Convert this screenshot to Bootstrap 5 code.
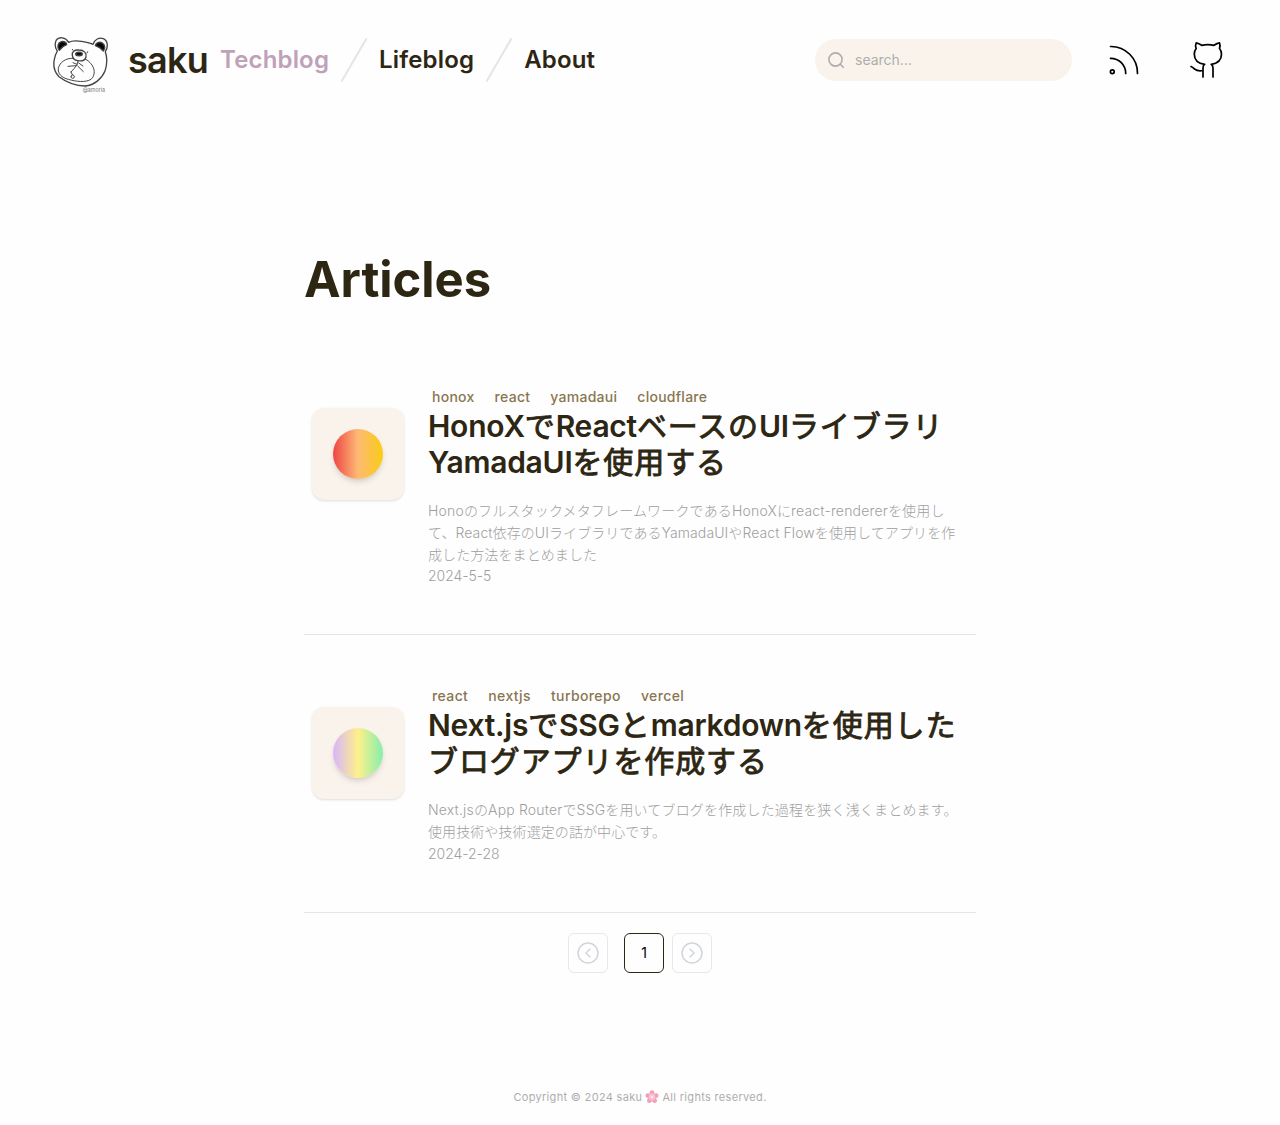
<!DOCTYPE html>
<html lang="ja">
<head>
<meta charset="utf-8">
<meta name="viewport" content="width=device-width, initial-scale=1">
<title>saku Techblog</title>
<link href="https://cdn.jsdelivr.net/npm/bootstrap@5.3.0/dist/css/bootstrap.min.css" rel="stylesheet">
<style>
body{font-family:Inter,"Noto Sans CJK JP",sans-serif;background:#fefefe;color:#2d2613;min-height:1125px}
a{color:inherit;text-decoration:none}
.site-header{height:120px;padding:0 52px}
.bear{width:56px;height:56px;margin-top:10px}
.brand{font-size:36px;font-weight:600;line-height:40px;margin-left:20px;width:80px;white-space:nowrap;letter-spacing:-.7px}
.site-nav{margin-left:12px;font-size:24px;font-weight:600;line-height:32px;letter-spacing:.17px}
.site-nav svg{width:26px;height:44px;margin:0 12px}
.current{color:#bfa1b8}
.search-box{width:257px;height:42px;border-radius:21px;background:#faf3ec;padding-left:12px}
.search-box input{border:0;background:transparent;outline:0;font-size:14px;width:190px;margin-left:10px;padding:0;color:#2d2613;position:relative;top:-1px}
.search-box input::placeholder{color:#adadad;opacity:1}
.articles{width:672px;padding-top:130px}
.articles h1{font-size:49px;font-weight:700;line-height:60px;margin:0 0 76px;letter-spacing:-.05px}
.entry{border-bottom:1px solid #e5e5e5;padding-left:8px}
.thumb{width:92px;height:92px;margin-top:22px;margin-right:24px;border-radius:12px;background:#faf3ec;box-shadow:0 1px 3px rgba(0,0,0,.1),0 1px 2px -1px rgba(0,0,0,.1)}
.orb{width:50px;height:50px;border-radius:50%;box-shadow:0 4px 6px -1px rgba(0,0,0,.12),0 2px 4px -2px rgba(0,0,0,.1)}
.orb-sunset{background:linear-gradient(90deg,#ef4444,#fdba74,#facc15)}
.orb-spring{background:linear-gradient(90deg,#d8b4fe,#fef08a,#86efac)}
.tags{font-size:14px;font-weight:500;line-height:22px;color:#8a7550;gap:20px;padding-left:4px;letter-spacing:.27px}
.tags-wide{letter-spacing:.39px}
.entry h2{font-size:30px;font-weight:600;line-height:36px;margin:0 0 20px;white-space:nowrap;letter-spacing:-.25px}
.entry h2 span{font-weight:400;letter-spacing:.9px;-webkit-text-stroke:.9px currentColor}
.summary{font-size:14px;font-weight:300;line-height:21.8px;color:#9f9f9f;white-space:nowrap;letter-spacing:.09px}
.summary .first-line{letter-spacing:.17px}
.summary time{letter-spacing:-.05px}
.pager{margin-top:20px}
.pager a{width:40px;height:40px;border:1px solid #e5e7eb;border-radius:6px;color:#d1d5db}
.pager .on{border-color:#2d2613;color:#000;font-size:14px;margin:0 8px 0 16px;padding-bottom:2px}
.copy{font-size:11px;line-height:16px;color:#adadad;margin-top:116px;letter-spacing:.32px}
.copy svg{width:14px;height:14px;margin:0 3px;vertical-align:-3px}
</style>
<script src="https://cdn.jsdelivr.net/npm/bootstrap@5.3.0/dist/js/bootstrap.bundle.min.js"></script>
</head>
<body>
<header class="site-header d-flex align-items-center">
  <svg class="bear flex-shrink-0" viewBox="36 36 168 168" fill="none" stroke="#444" stroke-width="4" stroke-linecap="round" stroke-linejoin="round">
    <path d="M52 78C45 68 44 55 49 45C57 34 77 37 86 52C95 46 110 47 125 49C138 51 151 53 159 58C164 43 178 36 190 41C204 47 205 66 196 80C202 98 202 117 195 138C185 162 163 180 136 183C107 182 78 171 57 155C42 140 39 123 43 103C45 92 48 85 52 78Z"/>
    <path d="M58 76C50 66 54 52 64 50C73 48 80 53 80 59C71 62 64 68 58 76Z" fill="#080808"/>
    <path d="M166 62C168 53 177 49 187 54C197 60 195 72 190 78C184 71 176 65 166 62Z" fill="#080808"/>
    <path d="M97 91C95 80 103 74 117 75C132 75 141 85 138 96C135 108 124 109 113 107C102 105 98 100 97 91Z"/>
    <ellipse cx="117" cy="87" rx="10" ry="5.500" fill="#111"/>
    <path d="M98 100C77 99 59 112 55 130C53 145 64 158 85 163C108 170 137 173 153 163C167 151 165 129 152 115C147 109 142 105 136 102M114 108L111 119L103 130L93 141M93 155A5 5 0 1 0 103 155A5 5 0 1 0 93 155M93 141L97 149M108 122L84 124M111 118L99 113M116 114L129 123M113 123L130 140M97 73L99 76M143 80L141 84" stroke-width="3"/>
    <text x="128" y="200" font-size="19" fill="#777" stroke="none" textLength="67" lengthAdjust="spacingAndGlyphs">@amoria</text>
  </svg>
  <a class="brand" href="#">saku</a>
  <nav class="site-nav d-flex align-items-center">
    <a class="current" href="#">Techblog</a>
    <svg viewBox="0 0 26 44" stroke="#e5e5e9" stroke-width="2"><path d="M25.500 .5L.5 43.500"/></svg>
    <a href="#">Lifeblog</a>
    <svg viewBox="0 0 26 44" stroke="#e5e5e9" stroke-width="2"><path d="M25.500 .5L.5 43.500"/></svg>
    <a href="#">About</a>
  </nav>
  <div class="search-box d-flex align-items-center ms-auto">
    <svg width="18" height="18" viewBox="0 0 18 18" fill="none" stroke="#adadad" stroke-width="1.600" stroke-linecap="round"><circle cx="8.500" cy="8.500" r="6.600"/><path d="M13.300 13.300l3 3"/></svg>
    <input type="text" placeholder="search...">
  </div>
  <a href="#" aria-label="RSS" style="margin-left:37px"><svg class="d-block" width="30" height="30" viewBox="0 0 30 30" fill="none" stroke="#000" stroke-width="1.700" stroke-linecap="round"><circle cx="3.300" cy="26.700" r="1.900"/><path d="M1.500 1.500A26.500 26.500 0 0 1 28.500 28.500M1.500 13.300A15 15 0 0 1 16.700 28.500"/></svg></a>
  <a href="#" aria-label="GitHub" style="margin:0 4px 0 50px"><svg class="d-block" width="35" height="38" viewBox="0 0 35 38" fill="none" stroke="#000" stroke-width="1.700" stroke-linecap="round" stroke-linejoin="round"><path d="M14 36V27C14 25.500 14.500 24 15.700 23.300C9 22.500 5.300 19 5.300 13C5.300 10.800 5.900 9 7.200 7.500C6.400 5.500 6.400 3.500 7.200 1.800C9.500 2.200 11.200 3.200 12.700 4.300C16.500 3.400 21.200 3.400 25 4.300C26.800 3 28.500 2 30.500 1.800C31.200 3.500 31.200 5.500 30.500 7.500C31.800 9 32.500 11 32.500 13C32.500 19 28.500 22.500 22.200 23.300C23.300 24 24 25.200 24 27V36M14 29.500C9.500 30.500 7.500 29.500 5.500 28C4.300 27 3.300 26.200 2 25.600"/></svg></a>
</header>

<main class="articles mx-auto">
  <h1>Articles</h1>
  <article class="entry d-flex" style="height:249px">
    <div class="thumb flex-shrink-0 d-flex align-items-center justify-content-center"><div class="orb orb-sunset"></div></div>
    <div>
      <div class="tags d-flex"><span>honox</span><span>react</span><span>yamadaui</span><span>cloudflare</span></div>
      <h2>HonoX<span>で</span>React<span>ベースの</span>UI<span>ライブラリ</span><br>YamadaUI<span>を使用する</span></h2>
      <div class="summary"><span class="first-line">HonoのフルスタックメタフレームワークであるHonoXにreact-rendererを使用し</span><br>て、React依存のUIライブラリであるYamadaUIやReact Flowを使用してアプリを作<br>成した方法をまとめました<br><time>2024-5-5</time></div>
    </div>
  </article>
  <article class="entry d-flex" style="height:278px;padding-top:50px">
    <div class="thumb flex-shrink-0 d-flex align-items-center justify-content-center"><div class="orb orb-spring"></div></div>
    <div>
      <div class="tags tags-wide d-flex"><span>react</span><span>nextjs</span><span>turborepo</span><span>vercel</span></div>
      <h2>Next.js<span>で</span>SSG<span>と</span>markdown<span>を使用した</span><br><span>ブログアプリを作成する</span></h2>
      <div class="summary"><span class="first-line">Next.jsのApp RouterでSSGを用いてブログを作成した過程を狭く浅くまとめます。</span><br>使用技術や技術選定の話が中心です。<br><time>2024-2-28</time></div>
    </div>
  </article>
  <nav class="pager d-flex justify-content-center">
    <a class="d-flex align-items-center justify-content-center" href="#"><svg width="24" height="24" viewBox="0 0 24 24" fill="none" stroke="currentColor" stroke-width="1.500" stroke-linecap="round" stroke-linejoin="round"><circle cx="12" cy="12" r="10"/><path d="M14 8l-4 4 4 4"/></svg></a>
    <a class="on d-flex align-items-center justify-content-center" href="#">1</a>
    <a class="d-flex align-items-center justify-content-center" href="#"><svg width="24" height="24" viewBox="0 0 24 24" fill="none" stroke="currentColor" stroke-width="1.500" stroke-linecap="round" stroke-linejoin="round"><circle cx="12" cy="12" r="10"/><path d="M10 8l4 4-4 4"/></svg></a>
  </nav>
</main>
<footer class="copy text-center">Copyright © 2024 saku<svg viewBox="-7 -7 14 14" aria-label="sakura"><g fill="#f3a0b9"><ellipse cy="-4" rx="2.400" ry="2.800"/><ellipse cy="-4" rx="2.400" ry="2.800" transform="rotate(72)"/><ellipse cy="-4" rx="2.400" ry="2.800" transform="rotate(144)"/><ellipse cy="-4" rx="2.400" ry="2.800" transform="rotate(216)"/><ellipse cy="-4" rx="2.400" ry="2.800" transform="rotate(288)"/></g><circle r="3.200" fill="#f8c3d2"/><circle r="1.200" fill="#fde8ee"/></svg>All rights reserved.</footer>
</body>
</html>
